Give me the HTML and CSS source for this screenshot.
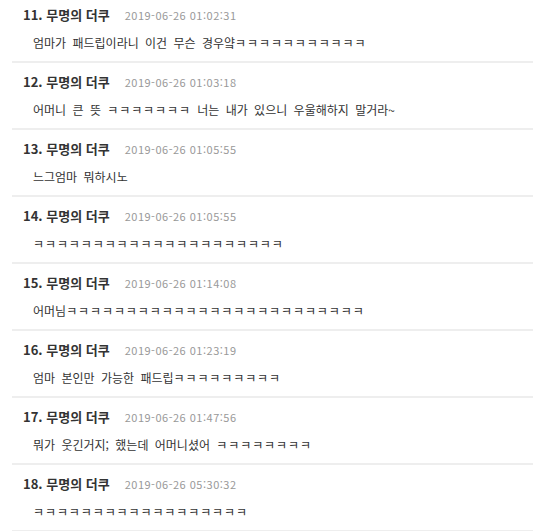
FILE: index.html
```html
<!DOCTYPE html>
<html lang="ko">
<head>
    <meta charset="UTF-8">
    <meta name="viewport" content="width=device-width, initial-scale=1.0">
    <title>댓글</title>
    <link rel="stylesheet" href="styles.css">
</head>
<body>
    <ul class="comments">
        <li class="comment">
            <div class="comment-head"><span class="author">11. 무명의 더쿠</span><span class="date">2019-06-26 01:02:31</span></div>
            <div class="comment-body">엄마가 패드립이라니 이건 무슨 경우얔<span class="kk">ㅋㅋㅋㅋㅋㅋㅋㅋㅋㅋㅋ</span></div>
        </li>
        <li class="comment">
            <div class="comment-head"><span class="author">12. 무명의 더쿠</span><span class="date">2019-06-26 01:03:18</span></div>
            <div class="comment-body">어머니 큰 뜻 <span class="kk">ㅋㅋㅋㅋㅋㅋㅋ</span> 너는 내가 있으니 우울해하지 말거라~</div>
        </li>
        <li class="comment">
            <div class="comment-head"><span class="author">13. 무명의 더쿠</span><span class="date">2019-06-26 01:05:55</span></div>
            <div class="comment-body">느그엄마 뭐하시노</div>
        </li>
        <li class="comment">
            <div class="comment-head"><span class="author">14. 무명의 더쿠</span><span class="date">2019-06-26 01:05:55</span></div>
            <div class="comment-body"><span class="kk">ㅋㅋㅋㅋㅋㅋㅋㅋㅋㅋㅋㅋㅋㅋㅋㅋㅋㅋㅋㅋㅋ</span></div>
        </li>
        <li class="comment">
            <div class="comment-head"><span class="author">15. 무명의 더쿠</span><span class="date">2019-06-26 01:14:08</span></div>
            <div class="comment-body">어머님<span class="kk">ㅋㅋㅋㅋㅋㅋㅋㅋㅋㅋㅋㅋㅋㅋㅋㅋㅋㅋㅋㅋㅋㅋㅋㅋㅋ</span></div>
        </li>
        <li class="comment">
            <div class="comment-head"><span class="author">16. 무명의 더쿠</span><span class="date">2019-06-26 01:23:19</span></div>
            <div class="comment-body">엄마 본인만 가능한 패드립<span class="kk">ㅋㅋㅋㅋㅋㅋㅋㅋㅋ</span></div>
        </li>
        <li class="comment">
            <div class="comment-head"><span class="author">17. 무명의 더쿠</span><span class="date">2019-06-26 01:47:56</span></div>
            <div class="comment-body">뭐가 웃긴거지; 했는데 어머니셨어 <span class="kk">ㅋㅋㅋㅋㅋㅋㅋㅋ</span></div>
        </li>
        <li class="comment">
            <div class="comment-head"><span class="author">18. 무명의 더쿠</span><span class="date">2019-06-26 05:30:32</span></div>
            <div class="comment-body"><span class="kk">ㅋㅋㅋㅋㅋㅋㅋㅋㅋㅋㅋㅋㅋㅋㅋㅋㅋㅋ</span></div>
        </li>
    </ul>
</body>
</html>
```

FILE: styles.css
```css
body {
    margin: 0;
    background: #fff;
    font-family: "Noto Sans CJK KR", "Noto Sans", sans-serif;
    color: #333;
}
.comments {
    list-style: none;
    margin: -4px 0 0 12px;
    padding: 0;
}
.comment {
    padding: 10px 0 8px 11px;
    border-bottom: 2px solid #eeeeee;
}
.comment-head {
    display: flex;
    align-items: baseline;
    height: 18px;
    line-height: 18px;
}
.author {
    font-size: 13px;
    font-weight: bold;
    color: #333;
}
.date {
    margin-left: 15px;
    font-size: 11px;
    letter-spacing: 0.5px;
    color: #999;
}
.comment-body {
    margin: 9px 0 0 10px;
    height: 20px;
    line-height: 20px;
    font-size: 12px;
    word-spacing: 3px;
    color: #333;
    white-space: nowrap;
}
.kk {
    letter-spacing: 0.9px;
}
```
